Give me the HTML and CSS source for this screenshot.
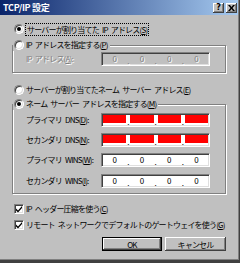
FILE: index.html
```html
<!DOCTYPE html>
<html lang="ja">
<head>
	<meta charset="UTF-8">
	<title>TCP/IP 設定</title>
	<link rel="stylesheet" href="styles.css">
</head>
<body>
	<div class="dialog">
		<div class="titlebar">
			<span class="title">TCP/IP 設定</span>
			<div class="tbtns">
				<div class="tbtn">?</div>
				<div class="tbtn"><svg width="7" height="6" viewBox="0 0 7 6"><path d="M0 0h2l1.5 2 1.5-2h2l-2.5 3 2.5 3h-2l-1.5-2-1.5 2h-2l2.5-3z" fill="#000"/></svg></div>
			</div>
		</div>
		<div class="content">
			<div class="row">
				<span class="radio on"></span>
				<span class="focus">サーバーが割り当てた IP アドレス(<u>S</u>)</span>
			</div>

			<fieldset class="group g1">
				<legend><div class="row leg"><span class="radio"></span><span>IP アドレスを指定する(<u>P</u>)</span></div></legend>
				<div class="frow">
					<span class="flabel off">IP アドレス(<u>A</u>):</span>
					<div class="ip off">
						<span class="oct">0</span><span class="dot">.</span><span class="oct">0</span><span class="dot">.</span><span class="oct">0</span><span class="dot">.</span><span class="oct">0</span>
					</div>
				</div>
			</fieldset>

			<div class="row r3">
				<span class="radio"></span>
				<span>サーバーが割り当てたネーム サーバー アドレス(<u>E</u>)</span>
			</div>

			<fieldset class="group g2">
				<legend><div class="row leg"><span class="radio on"></span><span>ネーム サーバー アドレスを指定する(<u>M</u>)</span></div></legend>
				<div class="frow">
					<span class="flabel">プライマリ DNS(<u>D</u>):</span>
					<div class="ip">
						<span class="oct red"></span><span class="dot">.</span><span class="oct red"></span><span class="dot">.</span><span class="oct red"></span><span class="dot">.</span><span class="oct red"></span>
					</div>
				</div>
				<div class="frow">
					<span class="flabel">セカンダリ DNS(<u>N</u>):</span>
					<div class="ip">
						<span class="oct red"></span><span class="dot">.</span><span class="oct red"></span><span class="dot">.</span><span class="oct red"></span><span class="dot">.</span><span class="oct red"></span>
					</div>
				</div>
				<div class="frow">
					<span class="flabel">プライマリ WINS(<u>W</u>):</span>
					<div class="ip">
						<span class="oct">0</span><span class="dot">.</span><span class="oct">0</span><span class="dot">.</span><span class="oct">0</span><span class="dot">.</span><span class="oct">0</span>
					</div>
				</div>
				<div class="frow last">
					<span class="flabel">セカンダリ WINS(<u>I</u>):</span>
					<div class="ip">
						<span class="oct">0</span><span class="dot">.</span><span class="oct">0</span><span class="dot">.</span><span class="oct">0</span><span class="dot">.</span><span class="oct">0</span>
					</div>
				</div>
			</fieldset>

			<div class="row c1">
				<span class="check"><svg width="8" height="8" viewBox="0 0 8 8"><path d="M1 3.5l2 2 4-4.5v2l-4 4.5-2-2z" fill="#000"/></svg></span>
				<span>IP ヘッダー圧縮を使う(<u>C</u>)</span>
			</div>
			<div class="row c2">
				<span class="check"><svg width="8" height="8" viewBox="0 0 8 8"><path d="M1 3.5l2 2 4-4.5v2l-4 4.5-2-2z" fill="#000"/></svg></span>
				<span>リモート ネットワークでデフォルトのゲートウェイを使う(<u>G</u>)</span>
			</div>

			<div class="btns">
				<div class="btn default">OK</div>
				<div class="btn">キャンセル</div>
			</div>
		</div>
	</div>
</body>
</html>
```

FILE: styles.css
```css
*{
	margin: 0;
	padding: 0;
	box-sizing: border-box;
}
body{
	width: 240px;
	height: 263px;
	overflow: hidden;
	background-color: #404040;
	font-family: "Noto Sans CJK JP", "DejaVu Sans", sans-serif;
	font-size: 8px;
	color: #000;
}
.dialog{
	width: 240px;
	height: 261px;
	background-color: #c0c0c0;
	box-shadow: inset -1px -1px #404040, inset -2px -2px #808080;
}
.titlebar{
	height: 15px;
	margin-right: 2px;
	padding: 0 1px 0 3px;
	display: flex;
	align-items: center;
	justify-content: space-between;
	background: linear-gradient(to right, #0a246a, #a6caf0);
}
.title{
	color: #fff;
	font-weight: bold;
	font-size: 9px;
	letter-spacing: -0.3px;
}
.tbtns{
	display: flex;
	gap: 2px;
}
.tbtn{
	width: 11px;
	height: 10px;
	display: flex;
	align-items: center;
	justify-content: center;
	background-color: #c0c0c0;
	box-shadow: inset -1px -1px #404040, inset 1px 1px #fff, inset -2px -2px #808080;
	font-family: "DejaVu Sans", sans-serif;
	font-weight: bold;
	font-size: 8px;
	line-height: 10px;
}
.content{
	padding: 8px 0 0 12px;
	letter-spacing: -0.8px;
	word-spacing: 2px;
}
.row{
	display: flex;
	align-items: center;
	height: 12px;
	line-height: 12px;
	padding-left: 2px;
	gap: 2px;
	white-space: nowrap;
}
.radio{
	flex: none;
	position: relative;
	width: 10px;
	height: 10px;
	border-radius: 50%;
	border: 1px solid;
	border-color: #808080 #fff #fff #808080;
	background-color: #fff;
	box-shadow: inset 1px 1px #404040, inset -1px -1px #dfdfdf;
}
.radio.on::after{
	content: "";
	position: absolute;
	left: 2px;
	top: 2px;
	width: 4px;
	height: 4px;
	border-radius: 50%;
	background-color: #000;
}
.focus{
	outline: 1px dotted #000;
	padding: 0 1px;
	line-height: 11px;
}
.group{
	margin-top: 4px;
	width: 214px;
	border: 1px solid #808080;
	box-shadow: inset 1px 1px #fff, 1px 1px #fff;
	padding: 1px 0 6px 0;
}
.group legend{
	background-color: #c0c0c0;
	padding-right: 2px;
}
.row.leg{
	padding-left: 1px;
}
.g2{
	margin-top: 2px;
	padding: 3px 0 5px 0;
}
.r3{
	margin-top: 11px;
}
.frow{
	display: flex;
	align-items: center;
	height: 14px;
	padding-left: 13px;
	white-space: nowrap;
}
.frow + .frow{
	margin-top: 6px;
}
.frow.last{
	margin-top: 7px;
}
.flabel{
	width: 75px;
	margin-top: -2px;
}
.off{
	color: #808080;
	text-shadow: 1px 1px #fff;
}
.ip{
	width: 109px;
	height: 14px;
	display: flex;
	padding: 1px;
	border: 1px solid;
	border-color: #808080 #fff #fff #808080;
	background-color: #fff;
	box-shadow: inset 1px 1px #404040, inset -1px -1px #dfdfdf;
	letter-spacing: 0;
}
.ip.off{
	background-color: #c0c0c0;
}
.oct{
	flex: 1;
	text-align: center;
	line-height: 9px;
}
.oct.red{
	height: 8px;
	background-color: #f00;
}
.dot{
	width: 4px;
	text-align: center;
	line-height: 14px;
}
.check{
	flex: none;
	width: 10px;
	height: 10px;
	display: flex;
	align-items: center;
	justify-content: center;
	border: 1px solid;
	border-color: #808080 #fff #fff #808080;
	background-color: #fff;
	box-shadow: inset 1px 1px #404040, inset -1px -1px #dfdfdf;
}
.c1{
	margin-top: 9px;
}
.c2{
	margin-top: 4px;
}
.btns{
	display: flex;
	gap: 3px;
	margin-top: 6px;
	padding-left: 90px;
}
.btn{
	width: 61px;
	height: 14px;
	display: flex;
	align-items: center;
	justify-content: center;
	background-color: #c0c0c0;
	box-shadow: inset -1px -1px #404040, inset 1px 1px #fff, inset -2px -2px #808080;
}
.btn.default{
	width: 60px;
	border: 1px solid #000;
}
```
